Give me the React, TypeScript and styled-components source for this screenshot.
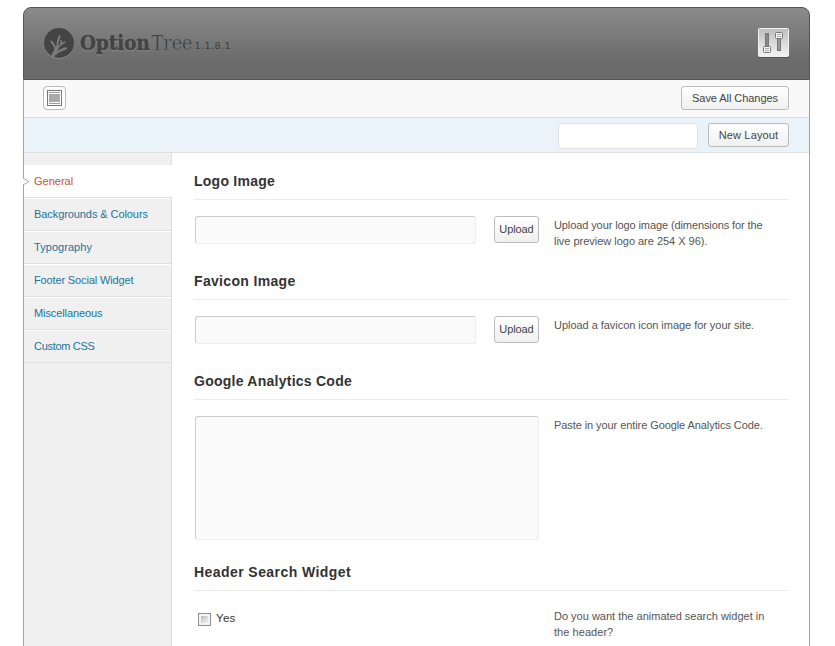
import React from "react";
import styled, { createGlobalStyle } from "styled-components";

const GlobalStyle = createGlobalStyle`
  * { box-sizing: border-box; }
  html, body { margin: 0; padding: 0; background: #fff; overflow: hidden; }
  body { font-family: "Liberation Sans", Arial, sans-serif; font-size: 11px; color: #555; }
`;

const Page = styled.div`
  height: 646px;
  padding: 7px 25px 0 23px;
  overflow: hidden;
`;

const Panel = styled.div`
  display: flex;
  flex-direction: column;
  width: 787px;
  height: 660px;
`;

const Header = styled.header`
  display: flex;
  align-items: flex-start;
  justify-content: space-between;
  height: 73px;
  padding: 0 20px 0 19px;
  border: 1px solid #555;
  border-radius: 8px 8px 0 0;
  background: linear-gradient(#8b8b8b 0%, #6b6b6b 75%, #6b6b6b 100%);
`;

const Logo = styled.svg`
  display: block;
  margin-top: 15px;
`;

const LogoWord = styled.text`
  font-family: "DejaVu Serif", serif;
  font-size: 20.5px;
`;

const BoldWord = styled(LogoWord)`
  font-weight: bold;
  fill: #444;
  stroke: #444;
  stroke-width: 0.5px;
  filter: drop-shadow(0 1px 0 #8b8b8b);
`;

const ThinWord = styled(LogoWord)`
  fill: #333;
  stroke: #777;
  stroke-width: 0.6px;
`;

const Version = styled.text`
  font-family: "DejaVu Sans", sans-serif;
  font-size: 9.5px;
  fill: #404040;
`;

const SettingsIcon = styled.svg`
  display: block;
  margin-top: 20px;
`;

const Body = styled.div`
  flex: 1;
  display: flex;
  flex-direction: column;
  border: solid #a3a3a3;
  border-width: 0 1px;
`;

const Toolbar = styled.div<{ $tint?: boolean }>`
  display: flex;
  align-items: flex-start;
  gap: 10px;
  height: ${(p) => (p.$tint ? 35 : 38)}px;
  padding: ${(p) => (p.$tint ? 5 : 6)}px 20px 0 19px;
  justify-content: ${(p) => (p.$tint ? "flex-end" : "space-between")};
  background: ${(p) => (p.$tint ? "#eaf2fa" : "#f9f9f9")};
  border-bottom: 1px solid #dfdfdf;
`;

const Button = styled.button<{ $w: number; $h?: number; $ls?: number }>`
  width: ${(p) => p.$w}px;
  height: ${(p) => p.$h ?? 24}px;
  padding: 0;
  border: 1px solid #bbb;
  border-radius: 3px;
  background: linear-gradient(#fff, #f0f0f0);
  color: #444;
  font: 11px/${(p) => (p.$h ?? 24) - 2}px "Liberation Sans", Arial, sans-serif;
  letter-spacing: ${(p) => p.$ls ?? -0.1}px;
  text-align: center;
  white-space: nowrap;
`;

const IconButton = styled.button`
  display: flex;
  align-items: center;
  justify-content: center;
  width: 23px;
  height: 24px;
  padding: 0;
  border: 1px solid #bbb;
  border-radius: 4px;
  background: #fff;
`;

const LayoutInput = styled.input`
  width: 140px;
  height: 26px;
  border: 1px solid #dfdfdf;
  border-radius: 3px;
  background: #fff;
`;

const Columns = styled.div`
  flex: 1;
  display: flex;
`;

const Sidebar = styled.nav`
  width: 148px;
  padding-top: 12px;
  background: linear-gradient(to right, #f0f0f0 147px, #dfdfdf 147px);
`;

const Tab = styled.a<{ $active?: boolean; $ls: number }>`
  display: flex;
  align-items: center;
  height: 33px;
  width: ${(p) => (p.$active ? 148 : 147)}px;
  padding: 0 0 2px ${(p) => (p.$active ? 0 : 10)}px;
  border-top: 1px solid #fff;
  border-bottom: 1px solid #dfdfdf;
  background: ${(p) => (p.$active ? "#fff" : "#f0f0f0")};
  color: ${(p) => (p.$active ? "#d54e21" : "#21759b")};
  letter-spacing: ${(p) => p.$ls}px;
  white-space: nowrap;
`;

const Pointer = styled.svg`
  display: block;
  margin: 2px 4px 0 -1px;
`;

const Content = styled.main`
  width: 617px;
  padding: 0 0 0 22px;
`;

const Section = styled.section<{ $h: number }>`
  height: ${(p) => p.$h}px;
  padding-top: 10px;
`;

const Heading = styled.h3<{ $ls?: number }>`
  height: 37px;
  margin: 0;
  border-bottom: 1px solid #ebebeb;
  color: #333;
  font-size: 14px;
  font-weight: bold;
  line-height: 36px;
  letter-spacing: ${(p) => p.$ls ?? 0.25}px;
`;

const Row = styled.div`
  display: flex;
  align-items: flex-start;
  padding: 16px 0 0 1px;
`;

const Control = styled.div`
  display: flex;
  justify-content: space-between;
  width: 344px;
  margin-right: 15px;
`;

const TextField = styled.input`
  width: 281px;
  height: 28px;
  border: 1px solid;
  border-color: #ccc #ededed #ededed #ccc;
  border-radius: 3px;
  background: #fafafa;
`;

const TextArea = styled.textarea`
  display: block;
  width: 344px;
  height: 124px;
  border: 1px solid;
  border-color: #ccc #ededed #ededed #ccc;
  border-radius: 3px;
  background: #fafafa;
  resize: none;
`;

const CheckLabel = styled.label`
  display: flex;
  align-items: center;
  gap: 5px;
  height: 13px;
  margin: 6px 0 0 3px;
  color: #333;
  font-size: 11.5px;
  letter-spacing: 0.3px;
`;

const CheckBox = styled.span`
  width: 13px;
  height: 13px;
  border: 1px solid #8e8f8f;
  background: linear-gradient(135deg, #b9bfc5, #f4f4f4) content-box, #f4f4f4;
  padding: 2px;
`;

const CheckText = styled.span`
  margin-top: -3px;
`;

const Description = styled.p`
  margin: 1px 0 0;
  line-height: 16px;
  white-space: nowrap;
`;

const Line = styled.span<{ $ls?: number }>`
  display: block;
  letter-spacing: ${(p) => p.$ls ?? 0}px;
`;

const tabs = [
  { name: "General", spacing: 0 },
  { name: "Backgrounds & Colours", spacing: -0.08 },
  { name: "Typography", spacing: 0.05 },
  { name: "Footer Social Widget", spacing: -0.14 },
  { name: "Miscellaneous", spacing: -0.1 },
  { name: "Custom CSS", spacing: -0.3 },
];

function LogoMark() {
  return (
    <Logo width="200" height="44" viewBox="0 0 200 44">
      <circle cx="16" cy="20.8" r="15" fill="#8c8c8c" />
      <circle cx="16" cy="20" r="15" fill="#444" />
      <g fill="none" stroke="#7c7c7c" strokeLinecap="round" strokeLinejoin="round">
        <path d="M9.800 33.500C10.500 30 12 28 14.200 25" strokeWidth="3.200" />
        <path d="M12.800 27C12 23.500 10.500 20.500 8.200 18.500" strokeWidth="1.800" />
        <path d="M14 25C14.500 20 15 16.500 16.700 13" strokeWidth="1.800" />
        <path d="M14.300 25C16.500 22.500 18.500 20.500 22 19M18 21L18.300 17.500" strokeWidth="1.600" />
        <path d="M11.500 31.500C15 28 18.500 27 23 25.300" strokeWidth="2.200" />
      </g>
      <BoldWord x="37" y="27" textLength="70" lengthAdjust="spacingAndGlyphs">Option</BoldWord>
      <ThinWord x="108.500" y="27" textLength="41" lengthAdjust="spacingAndGlyphs">Tree</ThinWord>
      <Version x="151.500" y="26" textLength="36">1.1.8.1</Version>
    </Logo>
  );
}

function Sliders() {
  return (
    <SettingsIcon width="31" height="31" viewBox="0 0 31 31">
      <defs>
        <linearGradient id="plate" x1="0" y1="0" x2="0" y2="1">
          <stop offset="0" stopColor="#bdbdbd" />
          <stop offset="1" stopColor="#f4f4f4" />
        </linearGradient>
      </defs>
      <rect x="0" y="2" width="31" height="28" rx="1.500" fill="#555" />
      <rect x=".5" y=".5" width="30" height="28" rx="1" fill="url(#plate)" stroke="#f2f2f2" />
      <rect x="7.500" y="5.500" width="3" height="15" fill="#888" stroke="#777" />
      <rect x="19.500" y="8.500" width="3" height="14" fill="#999" stroke="#777" />
      <g fill="#f4f4f4" stroke="#777">
        <rect x="5.500" y="18.500" width="7" height="6" rx="1" />
        <rect x="17.500" y="4.500" width="7" height="6" rx="1" />
      </g>
      <path d="M7 20.500H11M7 22.500H11M19 6.500H23M19 8.500H23" stroke="#aaa" />
    </SettingsIcon>
  );
}

export default function App() {
  return (
    <Page>
      <GlobalStyle />
      <Panel>
        <Header>
          <LogoMark />
          <Sliders />
        </Header>
        <Body>
          <Toolbar>
            <IconButton aria-label="Toggle options">
              <svg width="15" height="16" viewBox="0 0 15 16">
                <rect x=".5" y=".5" width="14" height="15" fill="#fff" stroke="#777" />
                <rect x="2" y="4" width="11" height="8" fill="#aaa" />
                <path d="M2 2.500H13M2 13.500H13" stroke="#999" />
              </svg>
            </IconButton>
            <Button $w={108} $ls={-0.06}>Save All Changes</Button>
          </Toolbar>
          <Toolbar $tint>
            <LayoutInput />
            <Button $w={81} $ls={0.15}>New Layout</Button>
          </Toolbar>
          <Columns>
            <Sidebar>
              {tabs.map((tab, i) => (
                <Tab key={tab.name} $active={i === 0} $ls={tab.spacing}>
                  {i === 0 && (
                    <Pointer width="7" height="9" viewBox="0 0 7 9">
                      <path d="M0 1L6 4.500L0 8" fill="#fff" stroke="#aaa" />
                    </Pointer>
                  )}
                  {tab.name}
                </Tab>
              ))}
            </Sidebar>
            <Content>
              <Section $h={100}>
                <Heading>Logo Image</Heading>
                <Row>
                  <Control>
                    <TextField />
                    <Button $w={45} $h={27}>Upload</Button>
                  </Control>
                  <Description>
                    <Line $ls={-0.1}>Upload your logo image (dimensions for the</Line>
                    <Line $ls={-0.02}>live preview logo are 254 X 96).</Line>
                  </Description>
                </Row>
              </Section>
              <Section $h={100}>
                <Heading $ls={0.33}>Favicon Image</Heading>
                <Row>
                  <Control>
                    <TextField />
                    <Button $w={45} $h={27}>Upload</Button>
                  </Control>
                  <Description>
                    <Line $ls={-0.04}>Upload a favicon icon image for your site.</Line>
                  </Description>
                </Row>
              </Section>
              <Section $h={191}>
                <Heading>Google Analytics Code</Heading>
                <Row>
                  <Control>
                    <TextArea />
                  </Control>
                  <Description>
                    <Line $ls={-0.08}>Paste in your entire Google Analytics Code.</Line>
                  </Description>
                </Row>
              </Section>
              <Section $h={110}>
                <Heading $ls={0.43}>Header Search Widget</Heading>
                <Row>
                  <Control>
                    <CheckLabel>
                      <CheckBox />
                      <CheckText>Yes</CheckText>
                    </CheckLabel>
                  </Control>
                  <Description>
                    <Line>Do you want the animated search widget in</Line>
                    <Line $ls={0.05}>the header?</Line>
                  </Description>
                </Row>
              </Section>
            </Content>
          </Columns>
        </Body>
      </Panel>
    </Page>
  );
}
